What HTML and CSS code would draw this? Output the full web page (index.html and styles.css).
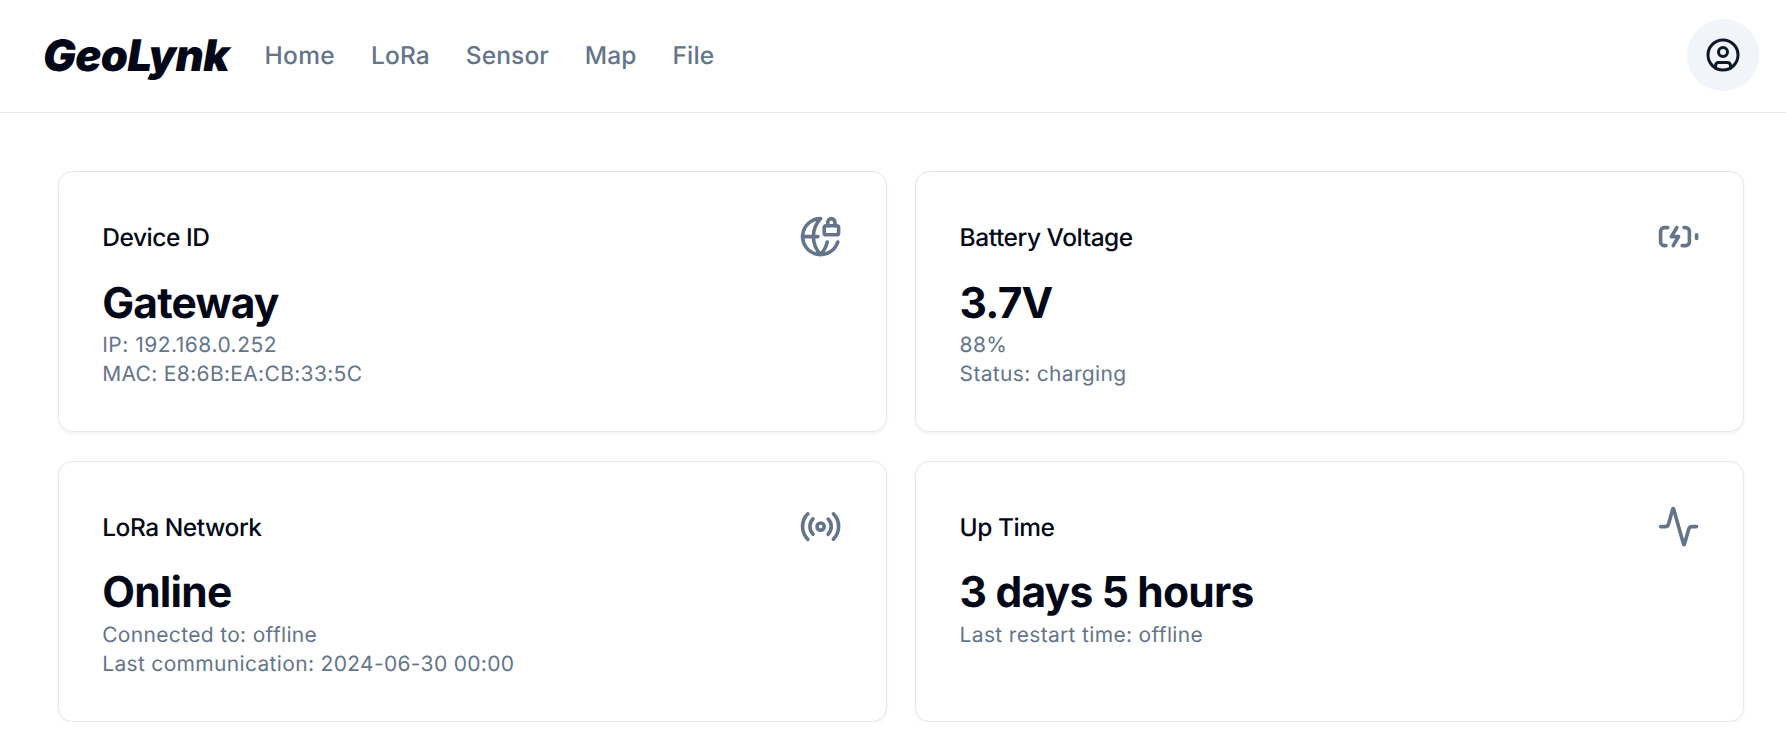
FILE: index.html
```html
<!DOCTYPE html>
<html lang="en">
<head>
<meta charset="utf-8">
<title>GeoLynk</title>
<link rel="stylesheet" href="styles.css">
</head>
<body>
<header class="topbar">
  <a class="brand">GeoLynk</a>
  <nav class="nav">
    <a class="nav-home">Home</a><a>LoRa</a><a>Sensor</a><a>Map</a><a>File</a>
  </nav>
  <button class="avatar" aria-label="Account">
    <svg class="icon icon-user" viewBox="0 0 24 24"><circle cx="12" cy="12" r="10"/><circle cx="12" cy="10" r="3"/><path d="M7 20.662V19a2 2 0 0 1 2-2h6a2 2 0 0 1 2 2v1.662"/></svg>
  </button>
</header>
<main class="grid">
  <section class="card">
    <div class="card-head"><h3 class="title">Device ID</h3>
      <svg class="icon" viewBox="0 0 24 24"><path d="M15.686 15A14.5 14.5 0 0 1 12 22a14.5 14.5 0 0 1 0-20 10 10 0 1 0 9.542 13"/><path d="M2 12h8.5"/><path d="M20 6V4a2 2 0 1 0-4 0v2"/><rect width="8" height="5" x="14" y="6" rx="1"/></svg>
    </div>
    <div class="value">Gateway</div>
    <p class="note note-ip">IP: 192.168.0.252</p>
    <p class="note">MAC: E8:6B:EA:CB:33:5C</p>
  </section>
  <section class="card">
    <div class="card-head"><h3 class="title">Battery Voltage</h3>
      <svg class="icon" viewBox="0 0 24 24"><path d="M15 7h1a2 2 0 0 1 2 2v6a2 2 0 0 1-2 2h-2"/><path d="M6 7H4a2 2 0 0 0-2 2v6a2 2 0 0 0 2 2h1"/><path d="m11 7-3 5h4l-3 5"/><path d="M22 11v2"/></svg>
    </div>
    <div class="value">3.7V</div>
    <p class="note">88%</p>
    <p class="note">Status: charging</p>
  </section>
  <section class="card">
    <div class="card-head"><h3 class="title">LoRa Network</h3>
      <svg class="icon" viewBox="0 0 24 24"><path d="M4.9 19.1C1 15.2 1 8.8 4.9 4.9"/><path d="M7.8 16.2c-2.3-2.3-2.3-6.1 0-8.5"/><circle cx="12" cy="12" r="2"/><path d="M16.2 7.8c2.3 2.3 2.3 6.1 0 8.5"/><path d="M19.1 4.9C23 8.8 23 15.1 19.1 19"/></svg>
    </div>
    <div class="value">Online</div>
    <p class="note">Connected to: offline</p>
    <p class="note">Last communication: 2024-06-30 00:00</p>
  </section>
  <section class="card">
    <div class="card-head"><h3 class="title">Up Time</h3>
      <svg class="icon" viewBox="0 0 24 24"><path d="M22 12h-2.48a2 2 0 0 0-1.93 1.46l-2.35 8.36a.25.25 0 0 1-.48 0L9.24 2.18a.25.25 0 0 0-.48 0l-2.35 8.36A2 2 0 0 1 4.49 12H2"/></svg>
    </div>
    <div class="value">3 days 5 hours</div>
    <p class="note">Last restart time: offline</p>
  </section>
</main>
</body>
</html>
```
FILE: styles.css
```css
* { box-sizing: border-box; }
body {
  margin: 0;
  background: #fff;
  color: #020817;
  font-family: Inter, "Liberation Sans", sans-serif;
  text-rendering: geometricPrecision;
  -webkit-font-smoothing: antialiased;
}
.topbar {
  display: flex;
  align-items: center;
  height: 113px;
  padding: 0 27px 2px 43px;
  border-bottom: 1px solid #e2e8f0;
}
.brand {
  font-size: 43.5px;
  font-weight: 900;
  font-style: italic;
  letter-spacing: -.6px;
  width: 221.5px;
  padding-top: 1px;
}
.nav {
  display: flex;
  gap: 36px;
  font-size: 24.5px;
  font-weight: 500;
  letter-spacing: .1px;
  color: #64748b;
}
.nav-home { letter-spacing: .35px; }
.avatar {
  display: flex;
  align-items: center;
  justify-content: center;
  width: 72px;
  height: 72px;
  margin-left: auto;
  padding: 0;
  border: 0;
  border-radius: 50%;
  background: #f1f5f9;
  color: #0f172a;
}
.icon {
  width: 43.2px;
  height: 43.2px;
  fill: none;
  stroke: currentColor;
  stroke-width: 2;
  stroke-linecap: round;
  stroke-linejoin: round;
}
.icon-user { width: 36px; height: 36px; }
.grid {
  display: grid;
  grid-template-columns: 1fr 1fr;
  gap: 28.8px;
  padding: 58px 42px 0 58px;
}
.card {
  min-height: 261px;
  padding: 43.2px 43.2px 40px;
  border: 1px solid #e2e8f0;
  border-radius: 14.4px;
  box-shadow: 0 1.8px 3.6px rgba(0, 0, 0, .05);
}
.card-head {
  display: flex;
  align-items: center;
  justify-content: space-between;
  padding-bottom: 16.2px;
  color: #64748b;
}
.title {
  margin: 0;
  font-size: 24.5px;
  font-weight: 500;
  letter-spacing: -.45px;
  color: #020817;
}
.value {
  font-size: 42.5px;
  line-height: 57.6px;
  font-weight: 700;
  letter-spacing: -.8px;
}
.note {
  margin: 0;
  font-size: 21px;
  line-height: 28.8px;
  letter-spacing: .33px;
  color: #64748b;
}
.note-ip { letter-spacing: .5px; }
```
